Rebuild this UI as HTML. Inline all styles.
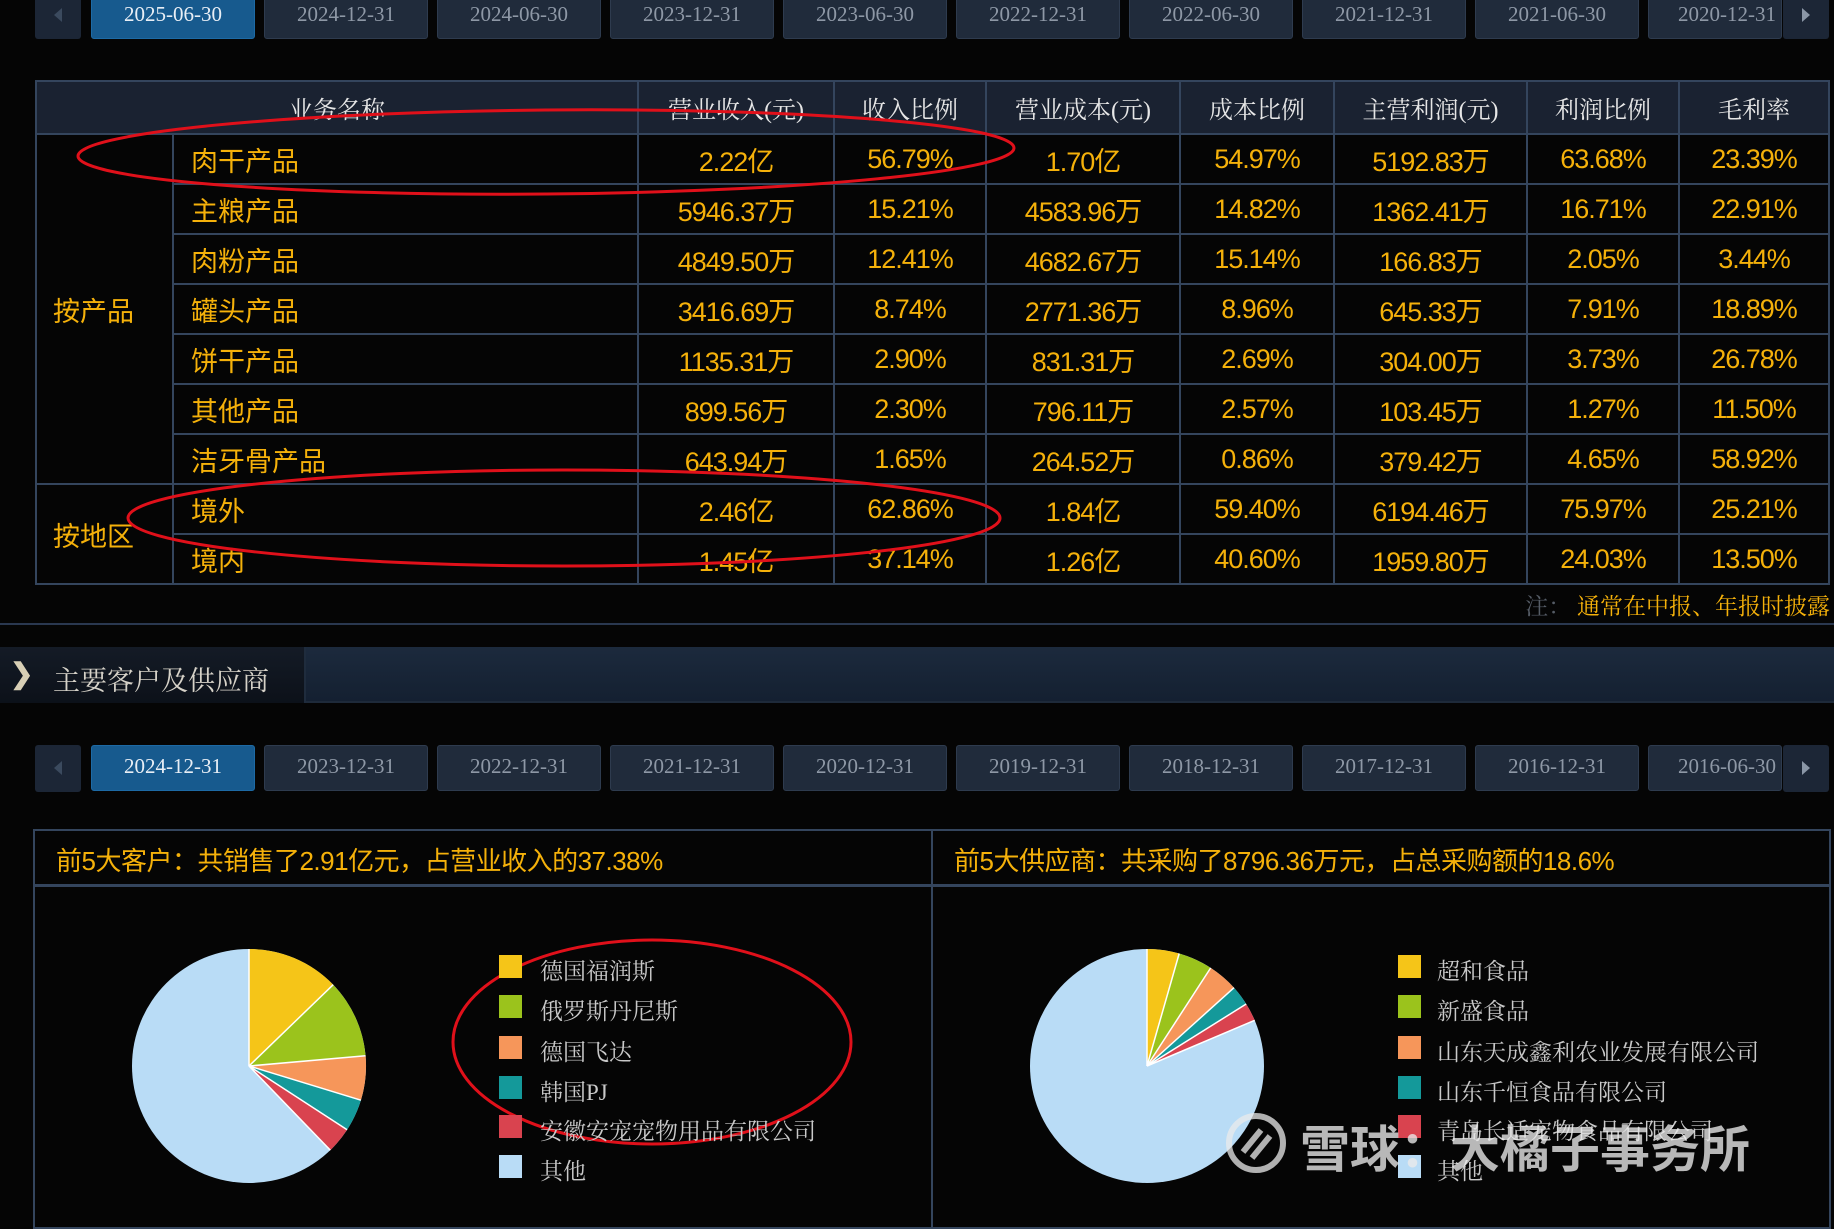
<!DOCTYPE html>
<html><head><meta charset="utf-8"><style>
*{margin:0;padding:0;box-sizing:border-box}
body{width:1834px;height:1202px;background:#050505;position:relative;overflow:hidden;font-family:"Liberation Sans","Noto Sans CJK SC",sans-serif}
.tab{position:absolute;height:46px;width:164px;background:#202b3b;border:1px solid #2e3b4e;border-radius:3px;color:#8e98a6;font:21px "Liberation Serif","Noto Serif CJK SC",serif;text-align:center;line-height:40px}
.tab.act{background:#175a8e;color:#e8eef5;border-color:#1d6aa5}
.nav{position:absolute;width:46px;background:#1c2636;border-radius:3px}
table{position:absolute;left:35px;top:80px;border-collapse:collapse;table-layout:fixed}
td,th{border:2px solid #34455d;font-size:27px;color:#f5b10a;text-align:center;height:50px;padding:0;letter-spacing:-1px}
th{background:#1a2231;color:#e6e6e6;font-weight:normal;font-family:"Liberation Serif","Noto Serif CJK SC",serif;height:53px;font-size:24px;letter-spacing:0}
td.n{text-align:left;padding-left:17px;letter-spacing:0}
.p{position:absolute;border:2px solid #34455d}
.leg{position:absolute;font-size:23px;color:#c9c9c9;font-family:"Liberation Serif","Noto Serif CJK SC",serif}
.sq{position:absolute;width:23px;height:23px}
</style></head><body>
<div class="nav" style="left:35px;top:-6px;height:45px"><svg width="46" height="45"><path d="M27 14 L19 21 L27 28Z" fill="#3b4a5e"/></svg></div>
<div class="tab act" style="left:91px;top:-7px">2025-06-30</div>
<div class="tab" style="left:264px;top:-7px">2024-12-31</div>
<div class="tab" style="left:437px;top:-7px">2024-06-30</div>
<div class="tab" style="left:610px;top:-7px">2023-12-31</div>
<div class="tab" style="left:783px;top:-7px">2023-06-30</div>
<div class="tab" style="left:956px;top:-7px">2022-12-31</div>
<div class="tab" style="left:1129px;top:-7px">2022-06-30</div>
<div class="tab" style="left:1302px;top:-7px">2021-12-31</div>
<div class="tab" style="left:1475px;top:-7px">2021-06-30</div>
<div class="tab" style="left:1648px;top:-7px;width:134px;overflow:hidden;text-align:left;padding-left:29px">2020-12-31</div>
<div class="nav" style="left:1783px;top:-6px;height:45px"><svg width="46" height="45"><path d="M19 14 L27 21 L19 28Z" fill="#8a96a6"/></svg></div>

<table>
<colgroup><col style="width:137px"><col style="width:465px"><col style="width:196px"><col style="width:152px"><col style="width:194px"><col style="width:154px"><col style="width:193px"><col style="width:152px"><col style="width:150px"></colgroup>
<tr><th colspan="2">业务名称</th><th>营业收入(元)</th><th>收入比例</th><th>营业成本(元)</th><th>成本比例</th><th>主营利润(元)</th><th>利润比例</th><th>毛利率</th></tr>
<tr><td rowspan="7" style="text-align:left;padding-left:16px;letter-spacing:0">按产品</td><td class="n">肉干产品</td><td>2.22亿</td><td>56.79%</td><td>1.70亿</td><td>54.97%</td><td>5192.83万</td><td>63.68%</td><td>23.39%</td></tr>
<tr><td class="n">主粮产品</td><td>5946.37万</td><td>15.21%</td><td>4583.96万</td><td>14.82%</td><td>1362.41万</td><td>16.71%</td><td>22.91%</td></tr>
<tr><td class="n">肉粉产品</td><td>4849.50万</td><td>12.41%</td><td>4682.67万</td><td>15.14%</td><td>166.83万</td><td>2.05%</td><td>3.44%</td></tr>
<tr><td class="n">罐头产品</td><td>3416.69万</td><td>8.74%</td><td>2771.36万</td><td>8.96%</td><td>645.33万</td><td>7.91%</td><td>18.89%</td></tr>
<tr><td class="n">饼干产品</td><td>1135.31万</td><td>2.90%</td><td>831.31万</td><td>2.69%</td><td>304.00万</td><td>3.73%</td><td>26.78%</td></tr>
<tr><td class="n">其他产品</td><td>899.56万</td><td>2.30%</td><td>796.11万</td><td>2.57%</td><td>103.45万</td><td>1.27%</td><td>11.50%</td></tr>
<tr><td class="n">洁牙骨产品</td><td>643.94万</td><td>1.65%</td><td>264.52万</td><td>0.86%</td><td>379.42万</td><td>4.65%</td><td>58.92%</td></tr>
<tr><td rowspan="2" style="text-align:left;padding-left:16px;letter-spacing:0">按地区</td><td class="n">境外</td><td>2.46亿</td><td>62.86%</td><td>1.84亿</td><td>59.40%</td><td>6194.46万</td><td>75.97%</td><td>25.21%</td></tr>
<tr><td class="n">境内</td><td>1.45亿</td><td>37.14%</td><td>1.26亿</td><td>40.60%</td><td>1959.80万</td><td>24.03%</td><td>13.50%</td></tr>
</table>

<div style="position:absolute;right:4px;top:588px;font-size:23px;font-family:'Liberation Serif','Noto Serif CJK SC',serif"><span style="color:#555c66">注：</span><span style="color:#f5b10a"> 通常在中报、年报时披露</span></div>
<div style="position:absolute;left:0;top:623px;width:1834px;height:2px;background:#2a3850"></div>

<div style="position:absolute;left:0;top:647px;width:1834px;height:56px;background:linear-gradient(#1c2a3d,#142031);border-bottom:2px solid #1e2a3a"></div>
<div style="position:absolute;left:0;top:647px;width:306px;height:56px;background:linear-gradient(#141b26,#0c1119);border-right:2px solid #1f2c3d"></div>
<div style="position:absolute;left:10px;top:657px;color:#d8cfb5;font-size:28px;font-weight:bold">❯</div>
<div style="position:absolute;left:53px;top:659px;color:#d6d2c8;font-size:27px;font-family:'Liberation Serif','Noto Serif CJK SC',serif">主要客户及供应商</div>

<div class="nav" style="left:35px;top:745px;height:47px"><svg width="46" height="47"><path d="M27 16 L19 23 L27 30Z" fill="#3b4a5e"/></svg></div>
<div class="tab act" style="left:91px;top:745px">2024-12-31</div>
<div class="tab" style="left:264px;top:745px">2023-12-31</div>
<div class="tab" style="left:437px;top:745px">2022-12-31</div>
<div class="tab" style="left:610px;top:745px">2021-12-31</div>
<div class="tab" style="left:783px;top:745px">2020-12-31</div>
<div class="tab" style="left:956px;top:745px">2019-12-31</div>
<div class="tab" style="left:1129px;top:745px">2018-12-31</div>
<div class="tab" style="left:1302px;top:745px">2017-12-31</div>
<div class="tab" style="left:1475px;top:745px">2016-12-31</div>
<div class="tab" style="left:1648px;top:745px;width:134px;overflow:hidden;text-align:left;padding-left:29px">2016-06-30</div>
<div class="nav" style="left:1783px;top:745px;height:47px"><svg width="46" height="47"><path d="M19 16 L27 23 L19 30Z" fill="#8a96a6"/></svg></div>

<div class="p" style="left:33px;top:829px;width:900px;height:400px"></div>
<div class="p" style="left:931px;top:829px;width:900px;height:400px"></div>
<div style="position:absolute;left:33px;top:884px;width:1798px;height:3px;background:#34455d"></div>
<div style="position:absolute;left:56px;top:841px;color:#f5b10a;font-size:26px;letter-spacing:-0.5px">前5大客户：共销售了2.91亿元，占营业收入的37.38%</div>
<div style="position:absolute;left:954px;top:841px;color:#f5b10a;font-size:26px;letter-spacing:-0.5px">前5大供应商：共采购了8796.36万元，占总采购额的18.6%</div>

<svg style="position:absolute;left:0;top:0" width="1834" height="1202">
<g transform="translate(249,1066)">
<circle r="117" fill="#b9dcf6"/>
<path d="M0 0 L0 -117 A117 117 0 0 1 84.2 -81.3Z" fill="#f5c518"/>
<path d="M0 0 L84.2 -81.3 A117 117 0 0 1 116.6 -10.2Z" fill="#9bc31c"/>
<path d="M0 0 L116.6 -10.2 A117 117 0 0 1 111.9 34.2Z" fill="#f6965a"/>
<path d="M0 0 L111.9 34.2 A117 117 0 0 1 98.1 63.7Z" fill="#14999a"/>
<path d="M0 0 L98.1 63.7 A117 117 0 0 1 81.3 84.2Z" fill="#d9434f"/>
<g stroke="#fff" stroke-width="1.5"><line x2="0" y2="-117"/><line x2="84.2" y2="-81.3"/><line x2="116.6" y2="-10.2"/><line x2="111.9" y2="34.2"/><line x2="98.1" y2="63.7"/><line x2="81.3" y2="84.2"/></g>
</g>
<g transform="translate(1147,1066)">
<circle r="117" fill="#b9dcf6"/>
<path d="M0 0 L0 -117 A117 117 0 0 1 32.2 -112.5Z" fill="#f5c518"/>
<path d="M0 0 L32.2 -112.5 A117 117 0 0 1 63.7 -98.1Z" fill="#9bc31c"/>
<path d="M0 0 L63.7 -98.1 A117 117 0 0 1 87 -78.3Z" fill="#f6965a"/>
<path d="M0 0 L87 -78.3 A117 117 0 0 1 99.2 -62Z" fill="#14999a"/>
<path d="M0 0 L99.2 -62 A117 117 0 0 1 107.7 -45.7Z" fill="#d9434f"/>
<g stroke="#fff" stroke-width="1.5"><line x2="0" y2="-117"/><line x2="32.2" y2="-112.5"/><line x2="63.7" y2="-98.1"/><line x2="87" y2="-78.3"/><line x2="99.2" y2="-62"/><line x2="107.7" y2="-45.7"/></g>
</g>
<g fill="none" stroke="#e0101a" stroke-width="3">
<ellipse cx="546" cy="152" rx="468" ry="42" transform="rotate(-0.5 546 152)"/>
<ellipse cx="564" cy="518" rx="436" ry="48"/>
<ellipse cx="652" cy="1042" rx="199" ry="102"/>
</g>
</svg>

<div class="sq" style="left:499px;top:955px;background:#f5c518"></div><div class="leg" style="left:540px;top:953px">德国福润斯</div>
<div class="sq" style="left:499px;top:995px;background:#9bc31c"></div><div class="leg" style="left:540px;top:993px">俄罗斯丹尼斯</div>
<div class="sq" style="left:499px;top:1036px;background:#f6965a"></div><div class="leg" style="left:540px;top:1034px">德国飞达</div>
<div class="sq" style="left:499px;top:1076px;background:#14999a"></div><div class="leg" style="left:540px;top:1074px">韩国PJ</div>
<div class="sq" style="left:499px;top:1115px;background:#d9434f"></div><div class="leg" style="left:540px;top:1113px">安徽安宠宠物用品有限公司</div>
<div class="sq" style="left:499px;top:1155px;background:#b9dcf6"></div><div class="leg" style="left:540px;top:1153px">其他</div>

<div class="sq" style="left:1398px;top:955px;background:#f5c518"></div><div class="leg" style="left:1437px;top:953px">超和食品</div>
<div class="sq" style="left:1398px;top:995px;background:#9bc31c"></div><div class="leg" style="left:1437px;top:993px">新盛食品</div>
<div class="sq" style="left:1398px;top:1036px;background:#f6965a"></div><div class="leg" style="left:1437px;top:1034px">山东天成鑫利农业发展有限公司</div>
<div class="sq" style="left:1398px;top:1076px;background:#14999a"></div><div class="leg" style="left:1437px;top:1074px">山东千恒食品有限公司</div>
<div class="sq" style="left:1398px;top:1115px;background:#d9434f"></div><div class="leg" style="left:1437px;top:1113px">青岛长适宠物食品有限公司</div>
<div class="sq" style="left:1398px;top:1155px;background:#b9dcf6"></div><div class="leg" style="left:1437px;top:1153px">其他</div>

<svg style="position:absolute;left:1224px;top:1111px" width="64" height="64"><circle cx="32" cy="32" r="27" fill="none" stroke="rgba(235,235,235,0.75)" stroke-width="6"/><path d="M19 41 L37 19 M28 47 L46 25" stroke="rgba(235,235,235,0.75)" stroke-width="6"/></svg>
<div style="position:absolute;left:1300px;top:1110px;color:rgba(235,235,235,0.78);font-size:50px;font-weight:bold">雪球：大橘子事务所</div>
</body></html>
